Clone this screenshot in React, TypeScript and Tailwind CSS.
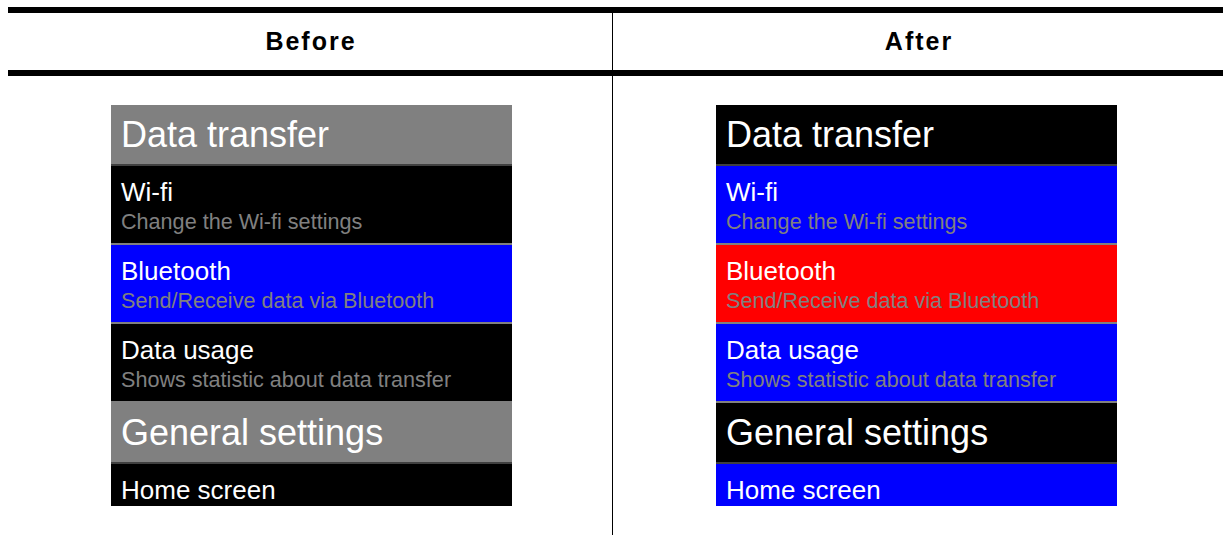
import React from 'react';

type Item = { title: string; desc?: string; bg: string };

type Section = { header: string; headerBg: string; items: Item[] };

function Panel({ sections, offset }: { sections: Section[]; offset: string }) {
  return (
    <div className={`flex h-[401px] w-[401px] flex-col overflow-hidden ${offset}`}>
      {sections.map((s) => (
        <React.Fragment key={s.header}>
          <div
            className={`flex h-[61px] shrink-0 items-center border-b-2 border-[#404040] pl-[10px] text-[36px] leading-none text-white ${s.headerBg}`}
          >
            {s.header}
          </div>
          {s.items.map((it) => (
            <div
              key={it.title}
              className={`flex h-[79px] shrink-0 flex-col border-b-2 border-[#808080] pl-[10px] pt-[13px] ${it.bg}`}
            >
              <div className="text-[26px] leading-none text-white">{it.title}</div>
              {it.desc && (
                <div className="mt-[6px] text-[21.6px] leading-none text-[#808080]">{it.desc}</div>
              )}
            </div>
          ))}
        </React.Fragment>
      ))}
    </div>
  );
}

export default function App() {
  const before: Section[] = [
    {
      header: 'Data transfer',
      headerBg: 'bg-[#808080]',
      items: [
        { title: 'Wi-fi', desc: 'Change the Wi-fi settings', bg: 'bg-black' },
        { title: 'Bluetooth', desc: 'Send/Receive data via Bluetooth', bg: 'bg-[#0000ff]' },
        { title: 'Data usage', desc: 'Shows statistic about data transfer', bg: 'bg-black' },
      ],
    },
    {
      header: 'General settings',
      headerBg: 'bg-[#808080]',
      items: [{ title: 'Home screen', bg: 'bg-black' }],
    },
  ];

  const after: Section[] = [
    {
      header: 'Data transfer',
      headerBg: 'bg-black',
      items: [
        { title: 'Wi-fi', desc: 'Change the Wi-fi settings', bg: 'bg-[#0000ff]' },
        { title: 'Bluetooth', desc: 'Send/Receive data via Bluetooth', bg: 'bg-[#ff0000]' },
        { title: 'Data usage', desc: 'Shows statistic about data transfer', bg: 'bg-[#0000ff]' },
      ],
    },
    {
      header: 'General settings',
      headerBg: 'bg-black',
      items: [{ title: 'Home screen', bg: 'bg-[#0000ff]' }],
    },
  ];

  return (
    <div
      className="h-[535px] w-[1223px] overflow-hidden bg-white pl-[8px] pt-[7px]"
      style={{ fontFamily: '"Liberation Sans", Arial, sans-serif' }}
    >
      {/* header row */}
      <div className="flex h-[69px] border-y-[6px] border-black">
        <div className="flex w-[605px] items-center justify-center border-r border-black pl-[2px] text-[25px] font-bold tracking-[2px] text-black">
          Before
        </div>
        <div className="flex flex-1 items-center justify-center pl-[2px] text-[25px] font-bold tracking-[2px] text-black">
          After
        </div>
      </div>

      {/* body row */}
      <div className="flex h-[460px]">
        <div className="w-[605px] border-r border-black pt-[29px]">
          <Panel sections={before} offset="ml-[103px]" />
        </div>
        <div className="flex-1 pt-[29px]">
          <Panel sections={after} offset="ml-[103px]" />
        </div>
      </div>
    </div>
  );
}
